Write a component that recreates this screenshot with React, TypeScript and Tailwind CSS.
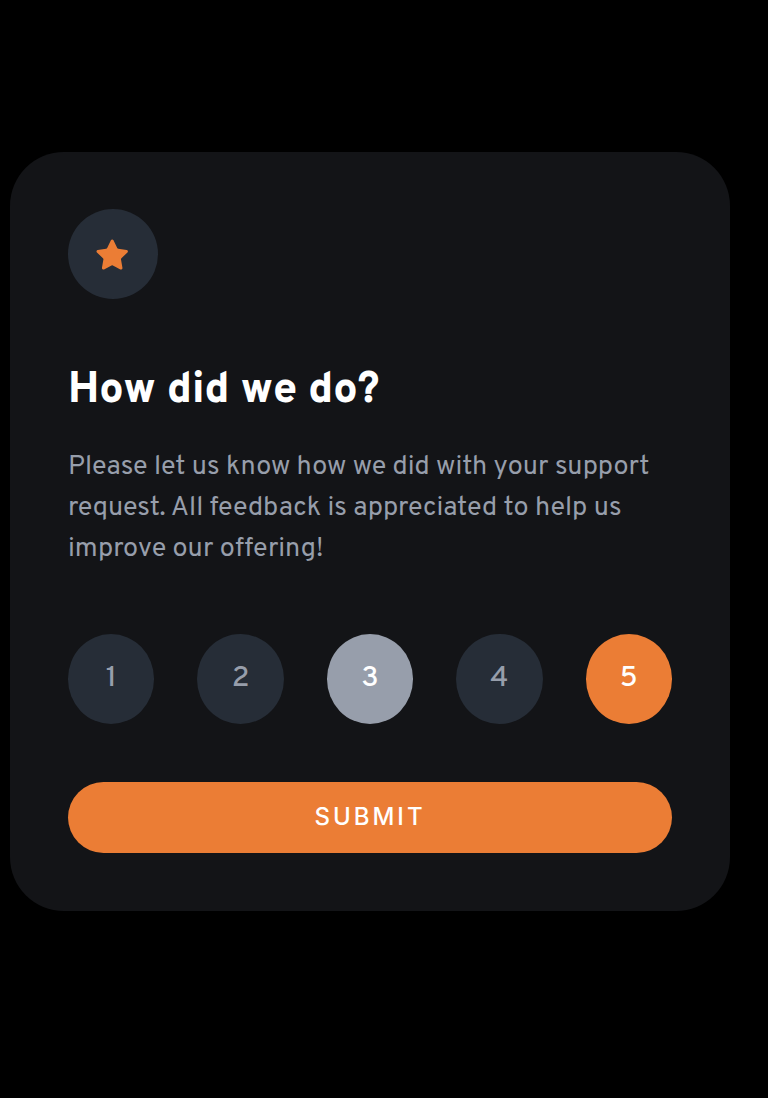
import { useState } from "react";

const ratings = [
  { value: 1, tone: "bg-[#262d37] text-[#979eab]" },
  { value: 2, tone: "bg-[#262d37] text-[#979eab]" },
  { value: 3, tone: "bg-[#979eab] text-white" },
  { value: 4, tone: "bg-[#262d37] text-[#979eab]" },
  { value: 5, tone: "bg-[#eb7d35] text-white" },
];

export default function App() {
  const [selected, setSelected] = useState(3);
  return (
    <main className="min-h-screen bg-black pt-[152px] pr-[38px] pb-16 pl-[10px] font-['Overpass','Open_Sans',sans-serif]">
      <section className="mx-auto w-full max-w-[720px] rounded-[54px] bg-[#131417] px-[58px] pt-[57px] pb-[58px]">
        <div className="flex size-[90px] items-center justify-center rounded-full bg-[#262d37]">
          <svg className="h-[30px] w-8 overflow-visible" viewBox="0.3 -0.3 17 16" aria-hidden="true">
            <path
              d="m9.067.43 1.99 4.031c.112.228.33.386.58.422l4.45.647a.772.772 0 0 1 .427 1.316l-3.22 3.138a.773.773 0 0 0-.222.683l.76 4.431a.772.772 0 0 1-1.12.813l-3.98-2.092a.773.773 0 0 0-.718 0l-3.98 2.092a.772.772 0 0 1-1.119-.813l.76-4.431a.77.77 0 0 0-.222-.683L.233 6.846A.772.772 0 0 1 .661 5.53l4.449-.647a.772.772 0 0 0 .58-.422L7.68.43a.774.774 0 0 1 1.387 0Z"
              fill="#eb7d35"
            />
          </svg>
        </div>
        <h1 className="mt-[68px] text-[43px] leading-[48px] font-extrabold text-white">How did we do?</h1>
        <p className="mt-[32px] text-[27px] leading-[41px] text-[#979eab]">
          Please let us know how we did with your support request. All feedback is appreciated to help us improve our
          offering!
        </p>
        <div className="mt-16 grid grid-cols-5 gap-[43px]">
          {ratings.map(({ value, tone }) => (
            <button
              key={value}
              type="button"
              aria-pressed={selected === value}
              onClick={() => setSelected(value)}
              className={`h-[90px] rounded-[50%] text-[29px] font-medium ${tone}`}
            >
              {value}
            </button>
          ))}
        </div>
        <button
          type="button"
          className="mt-[58px] h-[71px] w-full rounded-full bg-[#eb7d35] pb-0.5 font-['Inter',Arial,sans-serif] text-2xl font-medium tracking-[3px] text-white"
        >
          SUBMIT
        </button>
      </section>
    </main>
  );
}
